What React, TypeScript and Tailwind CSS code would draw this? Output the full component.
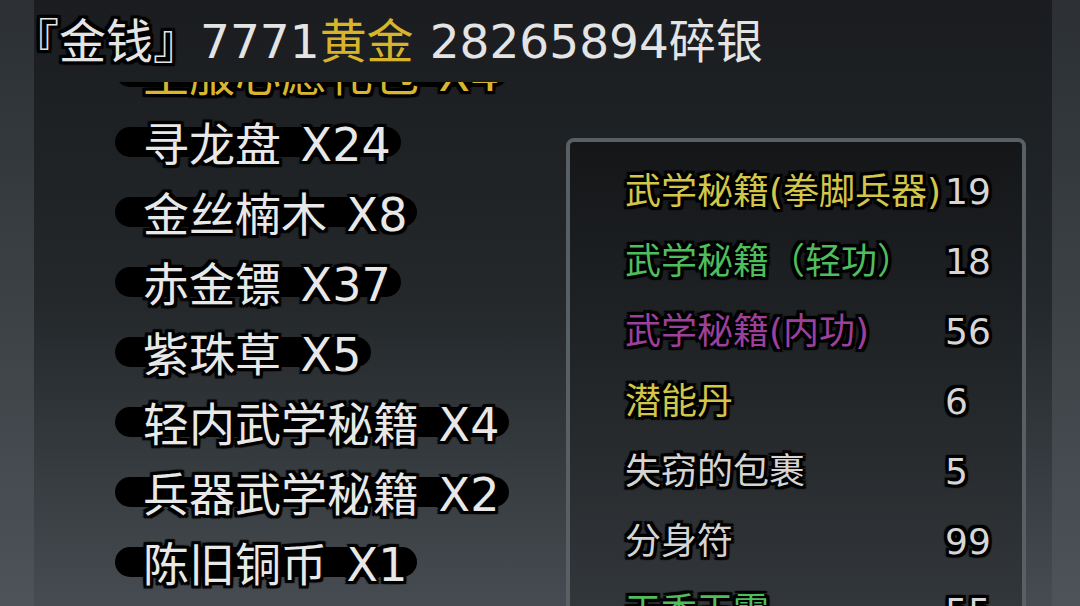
const font = '"DejaVu Sans","Noto Sans CJK SC",sans-serif';

const outline =
  '[text-shadow:0_0_3px_#000,3px_3px_1px_#000,-3px_-3px_1px_#000,3px_-3px_1px_#000,-3px_3px_1px_#000,0_3px_1px_#000,0_-3px_1px_#000,3px_0_1px_#000,-3px_0_1px_#000,2px_1px_1px_#000,-2px_1px_1px_#000]';

const bagItems = [
  { name: '主服心愿礼包 X4', color: 'text-[#d9b631]' },
  { name: '寻龙盘 X24', color: 'text-[#e8e8e8]' },
  { name: '金丝楠木 X8', color: 'text-[#e8e8e8]' },
  { name: '赤金镖 X37', color: 'text-[#e8e8e8]' },
  { name: '紫珠草 X5', color: 'text-[#e8e8e8]' },
  { name: '轻内武学秘籍 X4', color: 'text-[#e8e8e8]' },
  { name: '兵器武学秘籍 X2', color: 'text-[#e8e8e8]' },
  { name: '陈旧铜币 X1', color: 'text-[#e8e8e8]' },
];

const stockItems = [
  { name: '武学秘籍(拳脚兵器)', count: 19, color: 'text-[#d2c64a]' },
  { name: '武学秘籍（轻功）', count: 18, color: 'text-[#4fbd5e]' },
  { name: '武学秘籍(内功)', count: 56, color: 'text-[#9c409c]' },
  { name: '潜能丹', count: 6, color: 'text-[#d2c64a]' },
  { name: '失窃的包裹', count: 5, color: 'text-[#d4d4d4]' },
  { name: '分身符', count: 99, color: 'text-[#d4d4d4]' },
  { name: '天香玉露', count: 55, color: 'text-[#4fbd5e]' },
];

function BagRow({ name, color }: { name: string; color: string }) {
  return (
    <div className="h-[70px] flex items-center">
      <div className="relative">
        <span className="absolute left-[-28px] right-[-10px] top-[calc(50%-18px)] h-[30px] rounded-full bg-black" />
        <span className={`relative whitespace-nowrap text-[46px] leading-none [word-spacing:5px] ${color} ${outline}`}>
          {name}
        </span>
      </div>
    </div>
  );
}

export default function App() {
  return (
    <div
      className="w-[1080px] h-[606px] overflow-hidden flex bg-gradient-to-b from-[#2c3034] to-[#4d5358]"
      style={{ fontFamily: font }}
    >
      <div className="w-[34px] shrink-0" />
      <div className="w-[1018px] shrink-0 flex flex-col bg-gradient-to-b from-[#1a1c1f] via-[#24282b] to-[#464c51]">
        <div className="h-[82px] shrink-0 flex items-center text-[47px] leading-none text-[#e4e4e4] whitespace-nowrap">
          <span className={`ml-[-22px] ${outline}`}>『金钱』</span>
          <span>7771</span>
          <span className="text-[#d8b42a]">黄金</span>
          <span className="ml-[16px]">28265894碎银</span>
        </div>
        <div className="flex-1 flex min-h-0">
          <div className="w-[532px] shrink-0 overflow-hidden">
            <div className="mt-[-42px] pl-[109px]">
              {bagItems.map((it) => (
                <BagRow key={it.name} name={it.name} color={it.color} />
              ))}
            </div>
          </div>
          <div className="w-[460px] shrink-0 mt-[56px] h-[600px] rounded-[8px] border-4 border-[#596065] bg-gradient-to-b from-[#141618] to-[#3b4044] pt-[15px]">
            {stockItems.map((it) => (
              <div key={it.name} className="h-[70px] flex items-center text-[36px] leading-none">
                <span className={`w-[375px] pl-[55px] shrink-0 whitespace-nowrap ${it.color} ${outline}`}>{it.name}</span>
                <span className={`text-[#d6d6d6] ${outline}`}>{it.count}</span>
              </div>
            ))}
          </div>
        </div>
      </div>
      <div className="flex-1" />
    </div>
  );
}
